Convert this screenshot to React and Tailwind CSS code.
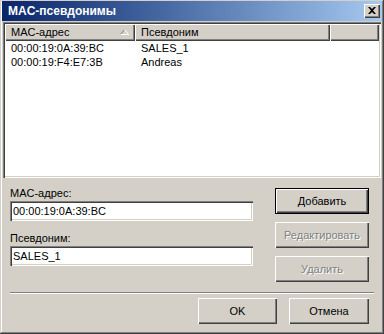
const RAISED =
  "shadow-[inset_1px_1px_0_#ffffff,inset_-1px_-1px_0_#404040,inset_-2px_-2px_0_#808080]";
const SUNKEN =
  "shadow-[inset_1px_1px_0_#808080,inset_2px_2px_0_#404040,inset_-1px_-1px_0_#ffffff,inset_-2px_-2px_0_#d4d0c8]";

const ROWS = [
  { mac: "00:00:19:0A:39:BC", alias: "SALES_1" },
  { mac: "00:00:19:F4:E7:3B", alias: "Andreas" },
];

function HeaderCell({ className = "", children }) {
  return (
    <div
      className={`h-full bg-[#d4d0c8] ${RAISED} flex items-center pl-[6px] relative ${className}`}
    >
      {children}
    </div>
  );
}

function Button({ children, isDefault, disabled, className = "" }) {
  if (isDefault) {
    return (
      <div className={`h-[26px] border border-black bg-[#d4d0c8] ${className}`}>
        <div className="h-full flex items-center justify-center shadow-[inset_1px_1px_0_#ffffff,inset_-1px_-1px_0_#404040,inset_-2px_-2px_0_#808080]">
          {children}
        </div>
      </div>
    );
  }
  return (
    <div
      className={`h-[26px] bg-[#d4d0c8] ${RAISED} flex items-center justify-center ${
        disabled ? "text-[#808080] [text-shadow:1px_1px_0_#ffffff]" : "text-black"
      } ${className}`}
    >
      {children}
    </div>
  );
}

function Field({ label, value, className = "" }) {
  return (
    <div className={className}>
      <div className="h-[15px] leading-[15px]">{label}</div>
      <div className={`h-[20px] bg-white ${SUNKEN} flex items-center pl-[3px]`}>
        {value}
      </div>
    </div>
  );
}

export default function App() {
  return (
    <div className="w-[384px] h-[334px] bg-[#d4d0c8] flex flex-col pt-[1px] px-[2px] text-[11px] text-black font-['Liberation_Sans',Arial,sans-serif] shadow-[inset_-1px_-1px_0_#404040,inset_1px_1px_0_#d4d0c8,inset_-2px_-2px_0_#808080,inset_2px_2px_0_#ffffff]">
      {/* title bar */}
      <div className="h-[20px] flex items-center justify-between bg-linear-to-r from-[#0a246a] to-[#a6caf0] pl-[6px] pr-[2px]">
        <span className="text-white font-bold text-[12px]">MAC-псевдонимы</span>
        <div className={`w-[16px] h-[14px] bg-[#d4d0c8] ${RAISED} flex items-center justify-center`}>
          <svg width="8" height="7" viewBox="0 0 8 7" className="mb-[1px]">
            <path d="M0 0h2l2 2 2-2h2L5 3.5 8 7H6L4 5 2 7H0l3-3.5z" fill="#000" />
          </svg>
        </div>
      </div>

      {/* list */}
      <div className={`mt-[1px] mx-[1px] h-[156px] bg-white ${SUNKEN} p-[2px]`}>
        <div className="flex h-[17px]">
          <HeaderCell className="w-[130px]">
            MAC-адрес
            <svg width="9" height="6" viewBox="0 0 9 6" className="absolute left-[115px] top-[5px]">
              <path d="M0.5 5.5 L4.5 0.5" stroke="#808080" fill="none" />
              <path d="M4.5 0.5 L8.5 5.5 M0.5 5.5 H8.5" stroke="#ffffff" fill="none" />
            </svg>
          </HeaderCell>
          <HeaderCell className="w-[195px]">Псевдоним</HeaderCell>
          <HeaderCell className="flex-1" />
        </div>
        {ROWS.map((r) => (
          <div key={r.mac} className="flex h-[14px] leading-[14px]">
            <div className="w-[130px] pl-[6px]">{r.mac}</div>
            <div className="pl-[6px]">{r.alias}</div>
          </div>
        ))}
      </div>

      {/* form */}
      <div className="flex mt-[8px] ml-[8px]">
        <div className="w-[243px]">
          <Field label="MAC-адрес:" value="00:00:19:0A:39:BC" />
          <Field label="Псевдоним:" value="SALES_1" className="mt-[10px]" />
        </div>
        <div className="w-[94px] ml-[22px] mt-[2px] flex flex-col gap-[8px]">
          <Button isDefault>Добавить</Button>
          <Button disabled>Редактировать</Button>
          <Button disabled>Удалить</Button>
        </div>
      </div>

      {/* separator */}
      <div className="ml-[8px] w-[364px] h-[2px] mt-[10px] border-t border-t-[#808080] border-b border-b-white" />

      <div className="flex justify-end gap-[12px] pr-[13px] mt-[4px]">
        <Button className="w-[79px]">OK</Button>
        <Button className="w-[80px]">Отмена</Button>
      </div>
    </div>
  );
}
